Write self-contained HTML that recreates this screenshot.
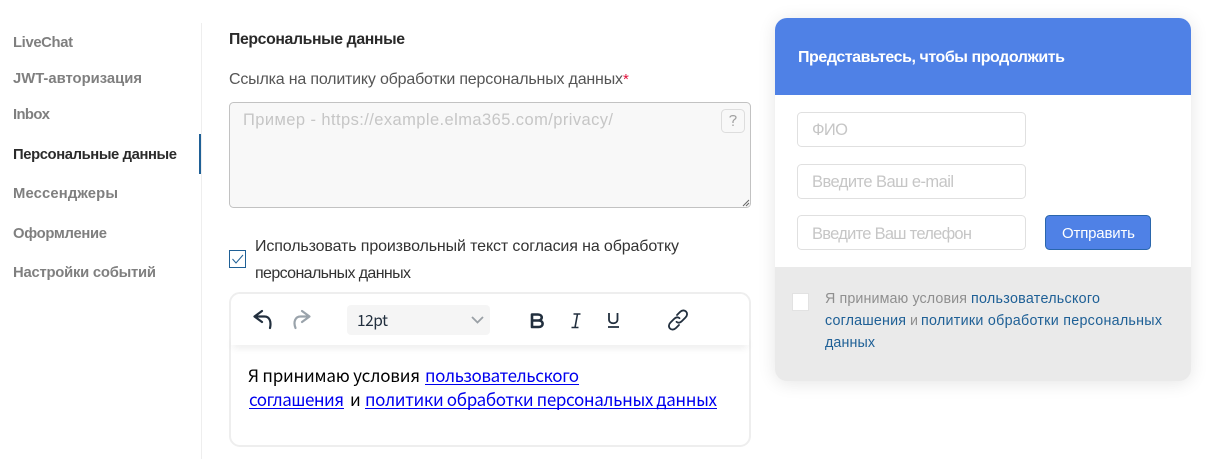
<!DOCTYPE html>
<html lang="ru"><head><meta charset="utf-8"><title>Персональные данные</title>
<style>
html,body{margin:0;padding:0;background:#fff;width:1206px;height:459px;overflow:hidden}
svg{display:block}
text{font-family:"Liberation Sans","Noto Sans CJK SC",sans-serif;white-space:pre}
.n{font-size:14.8px;font-weight:700;fill:#7f7f7f}
.m{font-size:16px;fill:#333}
.ph{font-size:16.500px;fill:#c6c6c6}
.e{font-family:"Noto Sans CJK SC","Liberation Sans",sans-serif;font-size:17px;fill:#000}
.l{fill:#0000ee}
.f{font-size:14.300px;fill:#8f8f8f}
.fl{font-size:14.300px;fill:#1f6096}
.ic{fill:none;stroke:#222f3e;stroke-width:2.2;stroke-linecap:round;stroke-linejoin:round}
</style></head><body>
<svg width="1206" height="459" viewBox="0 0 1206 459" xmlns="http://www.w3.org/2000/svg">
<defs>
<filter id="s" x="-10%" y="-10%" width="120%" height="125%"><feGaussianBlur stdDeviation="9"/></filter>
<filter id="t" x="-5%" y="-300%" width="110%" height="700%"><feGaussianBlur stdDeviation="4"/></filter>
<clipPath id="c"><rect x="775" y="18" width="416" height="363" rx="12"/></clipPath>
</defs>

<!-- sidebar -->
<rect x="201" y="23" width="1" height="436" fill="#eeeeee"/>
<rect x="199" y="134" width="2" height="40" fill="#1f6096"/>
<text class="n" x="13" y="47" textLength="60">LiveChat</text>
<text class="n" x="13" y="83" textLength="129">JWT-авторизация</text>
<text class="n" x="13" y="119" textLength="37">Inbox</text>
<text class="n" x="13" y="159" textLength="164" style="fill:#2b2b2b">Персональные данные</text>
<text class="n" x="13" y="198" textLength="105">Мессенджеры</text>
<text class="n" x="13" y="238" textLength="94">Оформление</text>
<text class="n" x="13" y="277" textLength="143">Настройки событий</text>

<!-- main -->
<text x="229" y="44" textLength="176" style="font-size:15.8px;font-weight:700;fill:#2a2a2a">Персональные данные</text>
<text class="m" x="229" y="84" textLength="394" style="fill:#555">Ссылка на политику обработки персональных данных</text>
<text x="623" y="84" style="font-size:15px;fill:#e0103a">*</text>

<rect x="229.5" y="102.5" width="521" height="105" rx="4" fill="#f8f8f8" stroke="#c2c2c2"/>
<text class="ph" x="243" y="125" textLength="370">Пример - https://example.elma365.com/privacy/</text>
<rect x="721.5" y="109.5" width="23" height="23" rx="4" fill="#f8f8f8" stroke="#dddddd"/>
<path d="M730 117.5c0-2.500 6-2.500 6 0 0 2-3 2-3 4v1.500m0 1.500v1.500" fill="none" stroke="#a0a0a0" stroke-width="1.300"/>
<path d="M743 206l6-6M746 206l3-3" stroke="#666" stroke-width="1" fill="none"/>

<rect x="229.5" y="250.5" width="16" height="17" fill="#fff" stroke="#1f6096" stroke-width="1"/>
<path d="M232.500 259l3.500 4 7-8" fill="none" stroke="#1f6096" stroke-width="1"/>
<text class="m" x="255" y="251" textLength="424">Использовать произвольный текст согласия на обработку</text>
<text class="m" x="255" y="278" textLength="156">персональных данных</text>

<!-- editor -->
<rect x="230" y="293" width="520" height="153" rx="10" fill="#fff" stroke="#eeeeee" stroke-width="2"/>
<rect x="233" y="342" width="514" height="5" fill="#000" opacity=".11" filter="url(#t)"/>
<path d="M231 345V303a9 9 0 0 1 9-9H740a9 9 0 0 1 9 9V345z" fill="#fff"/>
<rect x="347" y="305" width="143" height="30" rx="4" fill="#f5f5f5"/>
<text x="357" y="326" textLength="31" style="font-family:'Noto Sans CJK SC',sans-serif;font-size:15.500px;fill:#222f3e">12pt</text>
<path d="M472 317l5.500 5.500 5.500-5.500" fill="none" stroke="#9aa0a6" stroke-width="1.800"/>
<!-- undo / redo -->
<path class="ic" d="M262 311l-7.500 5.500 7.500 5.500M255 316.500h9.500c5 0 7 5 5.500 11.500"/>
<path class="ic" style="stroke:#9aa3ab" d="M302 311l7.500 5.500-7.500 5.500M309 316.500h-8.500c-5 0-7.500 5-5 11.500"/>
<!-- bold -->
<path class="ic" style="stroke-width:2.600;stroke-linecap:butt" d="M532 314.500h6c5 0 5 6 0 6h-6zM532 320.500h6.500c5.500 0 5.500 6.500 0 6.500H532z"/>
<!-- italic -->
<path class="ic" style="stroke-width:1.600;stroke-linecap:butt" d="M573.500 314h7M571.500 327.500h7M577.500 314l-2.500 13.500"/>
<!-- underline -->
<path class="ic" style="stroke-width:1.800;stroke-linecap:butt" d="M609 313v6.500c0 5 8.500 5 8.500 0V313M608 327h11"/>
<!-- link -->
<path class="ic" style="stroke-width:1.800" d="M677 315l3-3c2-2 4.500-2 6-.5s1.500 4-.5 6l-3.500 3.500c-2 2-4 2-5.500.8M679 325l-3 3c-2 2-4.500 2-6 .5s-1.500-4 .5-6l3.500-3.500c2-2 4-2 5.500-.8"/>

<text class="e" x="248" y="382" textLength="172">Я принимаю условия</text>
<text class="e l" x="425" y="382" textLength="154">пользовательского</text>
<rect x="425" y="384" width="154" height="1" fill="#0000ee"/>
<text class="e l" x="249" y="406" textLength="95">соглашения</text>
<rect x="249" y="408" width="95" height="1" fill="#0000ee"/>
<text class="e" x="350" y="406" textLength="10">и</text>
<text class="e l" x="365" y="406" textLength="352">политики обработки персональных данных</text>
<rect x="365" y="408" width="352" height="1" fill="#0000ee"/>

<!-- card -->
<rect x="775" y="20" width="416" height="363" rx="12" fill="#000" opacity=".10" filter="url(#s)"/>
<g clip-path="url(#c)">
<rect x="775" y="18" width="416" height="77" fill="#4f81e6"/>
<rect x="775" y="95" width="416" height="172" fill="#fff"/>
<rect x="775" y="267" width="416" height="114" fill="#eaeaea"/>
</g>
<text x="798" y="62" textLength="267" style="font-size:16px;font-weight:700;fill:#fff">Представьтесь, чтобы продолжить</text>

<rect x="797.500" y="112.500" width="228" height="34" rx="4" fill="#fff" stroke="#e0e0e0"/>
<rect x="797.500" y="164.500" width="228" height="34" rx="4" fill="#fff" stroke="#e0e0e0"/>
<rect x="797.500" y="215.500" width="228" height="34" rx="4" fill="#fff" stroke="#e0e0e0"/>
<text class="ph" x="812" y="135" textLength="36">ФИО</text>
<text class="ph" x="812" y="187" textLength="142">Введите Ваш e-mail</text>
<text class="ph" x="812" y="239" textLength="160">Введите Ваш телефон</text>
<rect x="1045.500" y="215.500" width="105" height="34" rx="4" fill="#4f81e6" stroke="#2a66ac"/>
<text x="1062" y="238" textLength="73" style="font-size:15px;fill:#fff">Отправить</text>

<rect x="792.500" y="293.500" width="16" height="17" fill="#fff" stroke="#e2e2e2"/>
<text class="f" x="825" y="303" textLength="142">Я принимаю условия</text>
<text class="fl" x="971" y="303" textLength="129">пользовательского</text>
<text class="fl" x="825" y="325" textLength="81">соглашения</text>
<text class="f" x="910" y="325" textLength="8">и</text>
<text class="fl" x="921" y="325" textLength="241">политики обработки персональных</text>
<text class="fl" x="825" y="347" textLength="50">данных</text>
</svg>
</body></html>
